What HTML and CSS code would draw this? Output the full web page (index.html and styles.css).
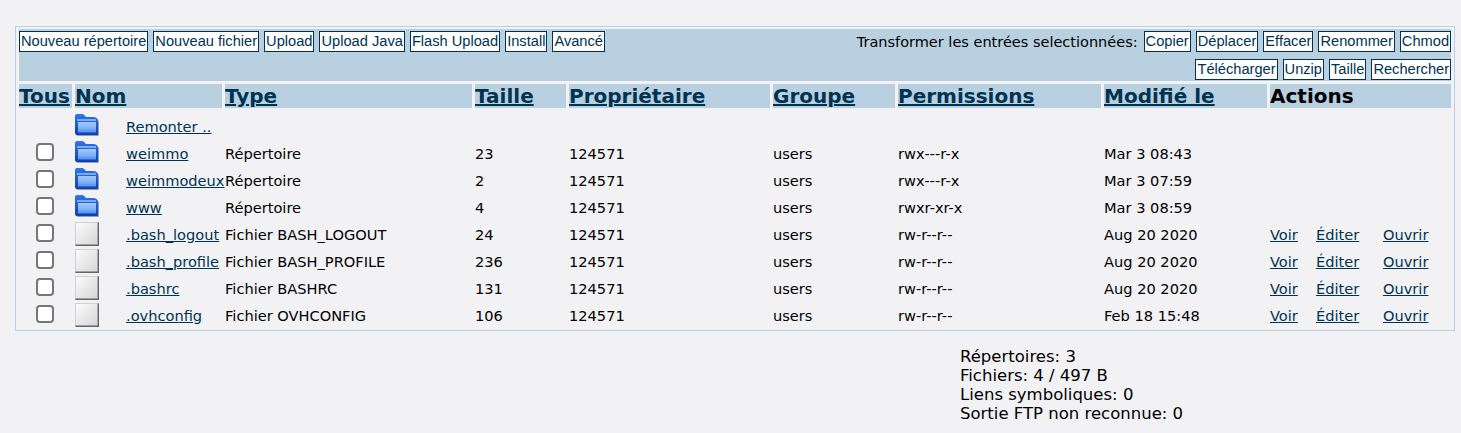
FILE: index.html
```html
<!DOCTYPE html>
<html lang="fr">
<head>
<meta charset="utf-8">
<title>FTP</title>
<link rel="stylesheet" href="styles.css">
</head>
<body>
<svg class="defs" width="0" height="0" aria-hidden="true">
  <defs>
    <linearGradient id="fb" x1="0" y1="0" x2="0" y2="1"><stop offset="0" stop-color="#2f78ea"/><stop offset="1" stop-color="#0a3fb8"/></linearGradient>
    <linearGradient id="ff" x1="0" y1="0" x2="0" y2="1"><stop offset="0" stop-color="#a4c9fb"/><stop offset=".6" stop-color="#7fb0f7"/><stop offset="1" stop-color="#4e8df0"/></linearGradient>
    <linearGradient id="fg" x1="0" y1="0" x2="1" y2="1"><stop offset="0" stop-color="#fbfbfb"/><stop offset="1" stop-color="#d6d6d6"/></linearGradient>
    <symbol id="folder" viewBox="0 0 24 24">
      <path d="M0 2 Q0 0 2 0 H8 L11 3 H19 Q23 3.500 23 8 V20 Q23 21 22 21 H2 Q0 21 0 19 Z" fill="#000" opacity=".35" transform="translate(1 1)"/>
      <path d="M0 2 Q0 0 2 0 H8 L11 3 H19 Q23 3.500 23 8 V20 Q23 21 22 21 H2 Q0 21 0 19 Z" fill="url(#fb)"/>
      <path d="M3 8 H21 V18.500 H3 Z" fill="url(#ff)"/>
      <path d="M2 6 H21" stroke="#bcd8fb" stroke-width="1.200" fill="none"/>
    </symbol>
    <symbol id="file" viewBox="0 0 24 24">
      <rect x="0" y="0" width="24" height="24" fill="#d0d0d0"/>
      <rect x="1" y="1" width="21.500" height="21.500" fill="url(#fg)"/>
      <path d="M23.300 0.500 V23.300 H0.500" fill="none" stroke="#666" stroke-width="1.400"/>
    </symbol>
  </defs>
</svg>
<main class="panel">
  <table class="listing">
    <colgroup>
      <col class="c-check"><col class="c-name"><col class="c-type"><col class="c-size"><col class="c-owner"><col class="c-group"><col class="c-perm"><col class="c-date"><col class="c-act">
    </colgroup>
    <thead>
      <tr>
        <td colspan="9" class="toolbar">
          <div class="tool-row">
            <div class="btns">
              <a class="btn" href="#">Nouveau répertoire</a><a class="btn" href="#">Nouveau fichier</a><a class="btn" href="#">Upload</a><a class="btn" href="#">Upload Java</a><a class="btn" href="#">Flash Upload</a><a class="btn" href="#">Install</a><a class="btn" href="#">Avancé</a>
            </div>
            <div class="btns">
              <span class="tool-label">Transformer les entrées selectionnées:</span><a class="btn" href="#">Copier</a><a class="btn" href="#">Déplacer</a><a class="btn" href="#">Effacer</a><a class="btn" href="#">Renommer</a><a class="btn" href="#">Chmod</a>
            </div>
          </div>
          <div class="tool-row tool-row-end">
            <div class="btns">
              <a class="btn" href="#">Télécharger</a><a class="btn" href="#">Unzip</a><a class="btn" href="#">Taille</a><a class="btn" href="#">Rechercher</a>
            </div>
          </div>
        </td>
      </tr>
      <tr class="heads">
        <th><a href="#">Tous</a></th>
        <th><a href="#">Nom</a></th>
        <th><a href="#">Type</a></th>
        <th><a href="#">Taille</a></th>
        <th><a href="#">Propriétaire</a></th>
        <th><a href="#">Groupe</a></th>
        <th><a href="#">Permissions</a></th>
        <th><a href="#">Modifié le</a></th>
        <th>Actions</th>
      </tr>
    </thead>
    <tbody>
      <tr class="up">
        <td></td>
        <td class="name-cell"><div class="name"><svg class="ico"><use href="#folder"/></svg><a href="#">Remonter ..</a></div></td>
        <td></td><td></td><td></td><td></td><td></td><td></td><td></td>
      </tr>
      <tr>
        <td class="chk"><input type="checkbox" class="box"></td>
        <td class="name-cell"><div class="name"><svg class="ico"><use href="#folder"/></svg><a href="#">weimmo</a></div></td>
        <td>Répertoire</td><td>23</td><td>124571</td><td>users</td><td>rwx---r-x</td><td>Mar 3 08:43</td><td></td>
      </tr>
      <tr>
        <td class="chk"><input type="checkbox" class="box"></td>
        <td class="name-cell"><div class="name"><svg class="ico"><use href="#folder"/></svg><a href="#">weimmodeux</a></div></td>
        <td>Répertoire</td><td>2</td><td>124571</td><td>users</td><td>rwx---r-x</td><td>Mar 3 07:59</td><td></td>
      </tr>
      <tr>
        <td class="chk"><input type="checkbox" class="box"></td>
        <td class="name-cell"><div class="name"><svg class="ico"><use href="#folder"/></svg><a href="#">www</a></div></td>
        <td>Répertoire</td><td>4</td><td>124571</td><td>users</td><td>rwxr-xr-x</td><td>Mar 3 08:59</td><td></td>
      </tr>
      <tr>
        <td class="chk"><input type="checkbox" class="box"></td>
        <td class="name-cell"><div class="name"><svg class="ico"><use href="#file"/></svg><a href="#">.bash_logout</a></div></td>
        <td>Fichier BASH_LOGOUT</td><td>24</td><td>124571</td><td>users</td><td>rw-r--r--</td><td>Aug 20 2020</td>
        <td><div class="acts"><a href="#">Voir</a><a href="#">Éditer</a><a href="#">Ouvrir</a></div></td>
      </tr>
      <tr>
        <td class="chk"><input type="checkbox" class="box"></td>
        <td class="name-cell"><div class="name"><svg class="ico"><use href="#file"/></svg><a href="#">.bash_profile</a></div></td>
        <td>Fichier BASH_PROFILE</td><td>236</td><td>124571</td><td>users</td><td>rw-r--r--</td><td>Aug 20 2020</td>
        <td><div class="acts"><a href="#">Voir</a><a href="#">Éditer</a><a href="#">Ouvrir</a></div></td>
      </tr>
      <tr>
        <td class="chk"><input type="checkbox" class="box"></td>
        <td class="name-cell"><div class="name"><svg class="ico"><use href="#file"/></svg><a href="#">.bashrc</a></div></td>
        <td>Fichier BASHRC</td><td>131</td><td>124571</td><td>users</td><td>rw-r--r--</td><td>Aug 20 2020</td>
        <td><div class="acts"><a href="#">Voir</a><a href="#">Éditer</a><a href="#">Ouvrir</a></div></td>
      </tr>
      <tr>
        <td class="chk"><input type="checkbox" class="box"></td>
        <td class="name-cell"><div class="name"><svg class="ico"><use href="#file"/></svg><a href="#">.ovhconfig</a></div></td>
        <td>Fichier OVHCONFIG</td><td>106</td><td>124571</td><td>users</td><td>rw-r--r--</td><td>Feb 18 15:48</td>
        <td><div class="acts"><a href="#">Voir</a><a href="#">Éditer</a><a href="#">Ouvrir</a></div></td>
      </tr>
    </tbody>
  </table>
</main>
<section class="stats">
  <div>Répertoires: 3</div>
  <div>Fichiers: 4 / 497 B</div>
  <div>Liens symboliques: 0</div>
  <div>Sortie FTP non reconnue: 0</div>
</section>
</body>
</html>
```
FILE: styles.css
```css
html, body {
  margin: 0;
  padding: 0;
  background: #f2f2f5;
  color: #000;
  font-family: "DejaVu Sans", Verdana, sans-serif;
  font-size: 14.6px;
}
body { padding: 26px 6px 0 15px; overflow: hidden; height: 407px; }
.defs { position: absolute; }
a { color: #003352; }
.panel {
  border: 1px solid #b9d0e0;
  padding: 2px 0;
  height: 299px;
}
.listing {
  border-collapse: separate;
  border-spacing: 3px;
  table-layout: fixed;
  width: 1438px;
  margin: -3px 0 0 0;
}
.c-check { width: 53px; }
.c-name { width: 147px; }
.c-type { width: 247px; }
.c-size { width: 91px; }
.c-owner { width: 201px; }
.c-group { width: 122px; }
.c-perm { width: 203px; }
.c-date { width: 163px; }
.c-act { width: 181px; }
.listing td, .listing th { padding: 0; white-space: nowrap; }
.listing td.toolbar {
  background: #b9d0e0;
  height: 52px;
  vertical-align: top;
}
.tool-row {
  display: flex;
  justify-content: space-between;
  align-items: center;
  height: 21px;
  padding-top: 2px;
}
.tool-row-end { justify-content: flex-end; padding-top: 7px; }
.btns { display: flex; align-items: center; gap: 5px; }
.btn {
  display: block;
  background: #fff;
  border: 1px solid #003352;
  color: #003352;
  font-family: "Liberation Sans", Arial, sans-serif;
  font-size: 14.65px;
  line-height: 19px;
  padding: 0 1px;
  text-decoration: none;
}
.tool-label { font-size: 14.5px; margin-right: 1px; }
.listing .heads th {
  box-sizing: border-box;
  background: #b9d0e0;
  height: 24px;
  padding-top: 1px;
  text-align: left;
  vertical-align: top;
  font-size: 20px;
  line-height: 23px;
  overflow: hidden;
}
.heads a { color: #003352; }
.listing tbody td {
  box-sizing: border-box;
  height: 24px;
  padding-top: 2px;
  line-height: 22px;
  vertical-align: top;
}
.listing tbody td.name-cell { padding-top: 0; }
.listing tbody .up td { height: 27px; padding-top: 3px; }
.name { display: flex; align-items: center; height: 24px; }
.name a { margin: 2px 0 0 27px; }
.ico { width: 24px; height: 24px; flex: none; overflow: visible; }
.listing tbody td.chk { padding: 2px 0 0 17px; }
.box {
  appearance: none;
  display: block;
  margin: 0;
  width: 18px;
  height: 18px;
  background: #fff;
  border: 2px solid #767676;
  border-radius: 4px;
  box-sizing: border-box;
}
.acts { display: grid; grid-template-columns: 46px 67px auto; justify-content: start; }
.stats {
  margin: 16px 0 0 945px;
  font-size: 16.5px;
  line-height: 19px;
}
```
